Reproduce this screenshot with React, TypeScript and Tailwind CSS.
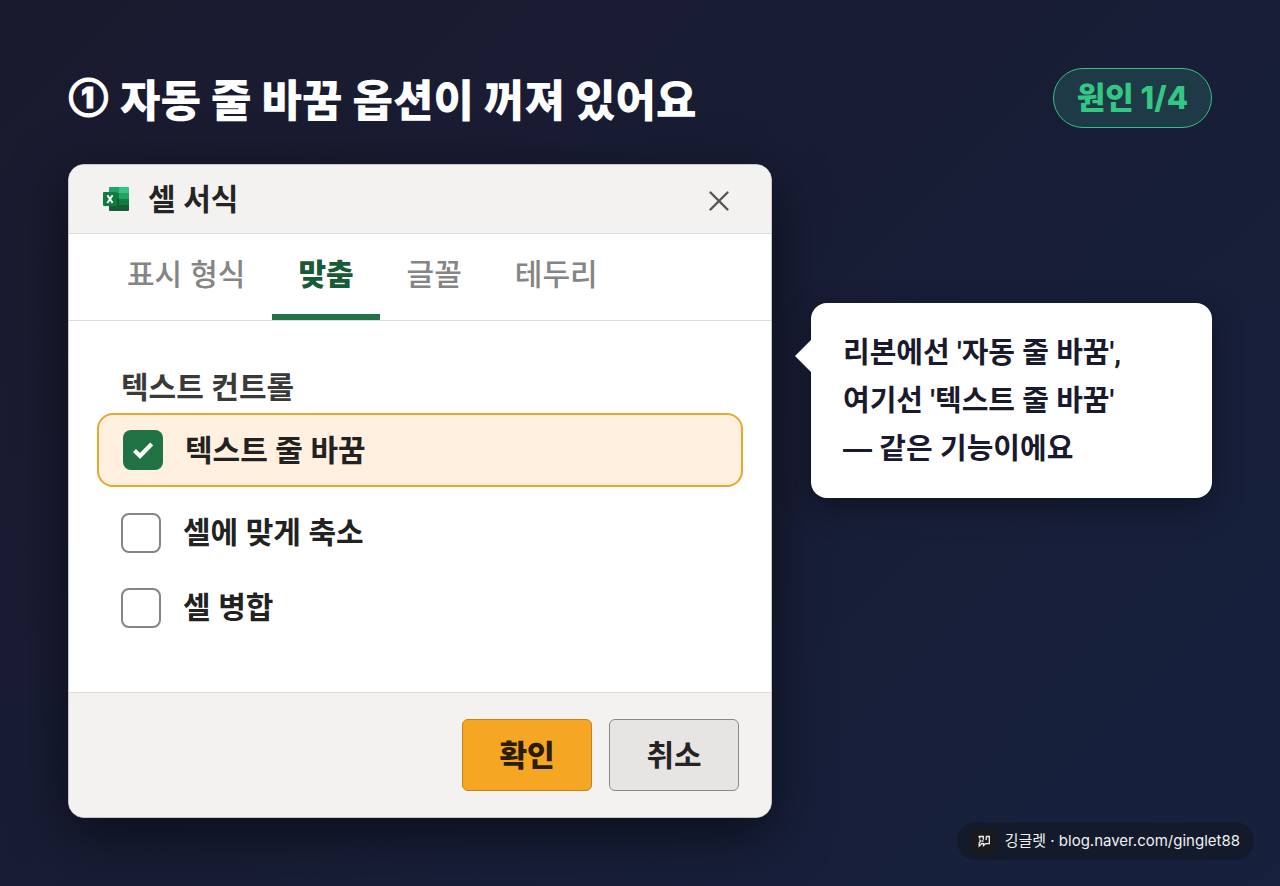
const tabs = ['표시 형식', '맞춤', '글꼴', '테두리'];

const ExcelIcon = () => (
    <svg className="w-7 h-7" viewBox="0 0 28 28" aria-hidden="true">
        <path d="M8 2h10v6H7V3a1 1 0 0 1 1-1z" fill="#21a366" />
        <path d="M17 2h9a1 1 0 0 1 1 1v5H17z" fill="#33c481" />
        <path d="M7 8h10v6H7z" fill="#107c41" />
        <path d="M17 8h10v6H17z" fill="#21a366" />
        <path d="M7 14h10v6H7z" fill="#185c37" />
        <path d="M17 14h10v6H17z" fill="#107c41" />
        <path d="M7 20h20v5a1 1 0 0 1-1 1H8a1 1 0 0 1-1-1z" fill="#185c37" />
        <rect x="1" y="7" width="14" height="14" rx="1" fill="#107c41" />
        <path d="M5.4 10.3l5.2 7.6M10.6 10.3l-5.2 7.6" stroke="#fff" strokeWidth="1.9" />
    </svg>
);

const BlogIcon = () => (
    <svg className="w-3.5 h-3.5" viewBox="0 0 14 14" fill="none" stroke="#f1f1f1" strokeWidth="1.3" aria-hidden="true">
        <path d="M1.5 2.5h4.8v3.2M9 2.5h3.3v7.2H8.5l-2 1.8V9.7l-1.7-.2L2.2 12V9l1.3-2-1-1.5M2 2.500l1 2" />
        <path d="M4.5 7h2M9.2 2.500V6" />
    </svg>
);

const CheckRow = ({ label }: { label: string }) => (
    <label className="flex items-center gap-[22px] h-[75px] px-6 text-[30px] font-semibold text-[#222222]">
        <input type="checkbox" className="appearance-none w-10 h-10 rounded-lg border-2 border-[#858585] bg-white" />
        {label}
    </label>
);

const Dialog = () => (
    <section className="flex-1 overflow-hidden rounded-2xl border border-[#c8c6c4] bg-white shadow-[0_16px_56px_rgba(0,0,0,0.55)]">
        <div className="flex items-center h-[69px] pl-[33px] pr-[38px] bg-[#f3f2f1] border-b border-[#dddddd]">
            <ExcelIcon />
            <h2 className="ml-[18px] text-[30px] font-semibold text-[#252423]">셀 서식</h2>
            <button type="button" aria-label="닫기" className="ml-auto px-0.5 pt-1">
                <svg className="w-6 h-6" viewBox="0 0 24 24" stroke="#555555" strokeWidth="2.4" strokeLinecap="round">
                    <path d="M3.5 3.5l17 17M20.5 3.5l-17 17" />
                </svg>
            </button>
        </div>
        <nav className="flex gap-px h-[87px] pl-8 border-b border-[#dddddd]">
            {tabs.map((tab) => (
                <button
                    key={tab}
                    type="button"
                    className={
                        tab === '맞춤'
                            ? 'px-[26px] text-[30px] font-extrabold text-[#185c37] border-b-[6px] border-[#217346]'
                            : 'px-[26px] text-[30px] font-medium text-[#858585] border-b-[6px] border-transparent'
                    }
                >
                    {tab}
                </button>
            ))}
        </nav>
        <div className="px-7 pt-[42px] pb-[47px]">
            <h3 className="mb-0.5 px-6 text-[30px] leading-[48px] font-semibold text-[#3b3a39]">텍스트 컨트롤</h3>
            <label className="flex items-center gap-[22px] h-[74px] mb-2 px-6 rounded-2xl border-2 border-[#eba72c] bg-[#fff0e0] text-[30px] font-semibold text-[#222222]">
                <span className="relative w-10 h-10">
                    <input type="checkbox" defaultChecked className="block appearance-none w-10 h-10 rounded-lg bg-[#217346]" />
                    <svg className="absolute inset-0 pointer-events-none" viewBox="0 0 40 40" fill="none" stroke="#fff" strokeWidth="4.2">
                        <path d="M11.5 20.5l5.5 5.5L28.7 14" />
                    </svg>
                </span>
                텍스트 줄 바꿈
            </label>
            <CheckRow label="셀에 맞게 축소" />
            <CheckRow label="셀 병합" />
        </div>
        <div className="flex justify-end gap-[17px] px-8 py-[26px] bg-[#f3f2f1] border-t border-[#dddddd]">
            <button type="button" className="w-[130px] h-[72px] rounded-md border border-[#c4841a] bg-[#f5a623] text-[30px] font-extrabold text-[#2b1d00]">
                확인
            </button>
            <button type="button" className="w-[130px] h-[72px] rounded-md border border-[#8a8886] bg-[#e6e5e3] text-[30px] font-bold text-[#252423]">
                취소
            </button>
        </div>
    </section>
);

const App = () => {
    return (
        <div className="flex flex-col min-h-screen bg-linear-135 from-[#1a1a2e] to-[#16213e] font-['Inter','Noto_Sans_CJK_KR',sans-serif]">
            <main className="px-[68px] pt-[68px]">
                <header className="flex items-center justify-between">
                    <h1 className="flex items-center gap-3 pl-px font-['Noto_Sans_CJK_KR',sans-serif] text-[44px] leading-[58px] font-extrabold text-white">
                        <span className="font-['Inter',sans-serif] text-[28px] font-black [-webkit-text-stroke:1px_white]">①</span>
                        자동 줄 바꿈 옵션이 꺼져 있어요
                    </h1>
                    <span className="flex items-center h-[60px] px-[23px] rounded-full border border-[#34c184] bg-[#1e3a47] text-[31px] font-extrabold text-[#34c784]">
                        원인 1/4
                    </span>
                </header>
                <div className="flex items-start gap-[39px] mt-9">
                    <Dialog />
                    <aside className="relative w-[401px] mt-[139px] px-8 pt-[26px] pb-[25px] rounded-2xl bg-white shadow-[0_10px_30px_rgba(0,0,0,0.35)]">
                        <svg className="absolute right-full top-[37px] w-4 h-8" viewBox="0 0 16 32" fill="#fff">
                            <path d="M16 0v32L0 16z" />
                        </svg>
                        <p className="font-['Roboto','Noto_Sans_CJK_KR',sans-serif] text-[29px] leading-[48px] font-semibold text-[#1a1a2e]">
                            리본에선 '자동 줄 바꿈',<br />
                            여기선 '텍스트 줄 바꿈'<br />
                            <span className="font-['Inter','Noto_Sans_CJK_KR',sans-serif]">— 같은 기능이에요</span>
                        </p>
                    </aside>
                </div>
            </main>
            <footer className="flex items-center self-end gap-2 h-[38px] mt-auto mr-[26px] mb-[26px] px-[14px] rounded-full bg-[#131a2b] text-[15px] text-[#f1f1f1]">
                <span className="grid place-items-center w-[26px] h-[26px] rounded-sm bg-[#1a1a1d]">
                    <BlogIcon />
                </span>
                <span>깅글렛 · <a href="https://blog.naver.com/ginglet88">blog.naver.com/ginglet88</a></span>
            </footer>
        </div>
    );
};

export default App;
